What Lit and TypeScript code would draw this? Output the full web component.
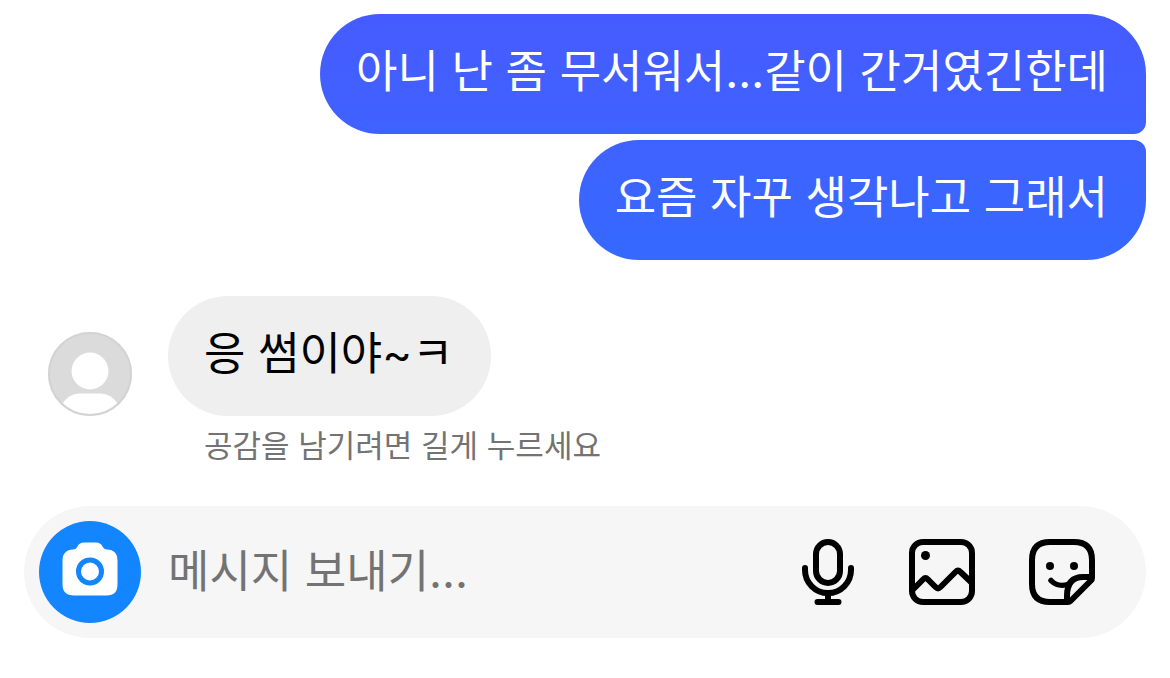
import { LitElement, html, css } from "lit";
import { customElement } from "lit/decorators.js";

@customElement("app-root")
export class AppRoot extends LitElement {
  static styles = css`
    :host {
      display: block;
      min-height: 100vh;
      box-sizing: border-box;
      padding: 14px 24px 40px;
      background: #fff;
      font-family: "Inter", "Noto Sans CJK KR", sans-serif;
      color: #000;
    }
    .sent {
      display: flex;
      flex-direction: column;
      align-items: flex-end;
      gap: 6px;
      margin-bottom: 36px;
    }
    .bubble {
      padding: 34px 38px 38px 36px;
      border-radius: 60px;
      font-size: 45px;
      line-height: 48px;
    }
    .first {
      color: #fff;
      border-bottom-right-radius: 12px;
      background: linear-gradient(#465bff, #3f62ff);
    }
    .last {
      color: #fff;
      border-top-right-radius: 12px;
      background: linear-gradient(#3f62ff, #3569ff);
    }
    .received {
      display: flex;
      align-items: flex-end;
      gap: 36px;
      padding-left: 24px;
    }
    .avatar {
      display: block;
      width: 84px;
      height: 84px;
    }
    .grey {
      background: #efefef;
    }
    .hint {
      margin: 12px 0 42px;
      padding-left: 180px;
      font-size: 31px;
      line-height: 36px;
      color: #737373;
    }
    .composer {
      display: flex;
      align-items: center;
      padding: 15px 48px 15px 15px;
      border-radius: 66px;
      background: #f6f6f6;
    }
    button {
      display: block;
      flex: none;
      margin: 0;
      padding: 0;
      border: 0;
      background: none;
      color: inherit;
    }
    button svg {
      display: block;
    }
    .camera {
      width: 102px;
      height: 102px;
      border-radius: 50%;
      background: #1285ff;
    }
    .field {
      flex: 1;
      min-width: 0;
      height: 72px;
      margin: 0 24px;
      padding: 0 3px 2px;
      box-sizing: border-box;
      border: 0;
      outline: none;
      background: none;
      font: inherit;
      font-size: 45px;
      color: #000;
    }
    .field::placeholder {
      color: #737373;
      opacity: 1;
    }
    .tools {
      display: flex;
      gap: 48px;
    }
  `;

  render() {
    return html`
      <div class="sent">
        <div class="bubble first">아니 난 좀 무서워서...같이 간거였긴한데</div>
        <div class="bubble last">요즘 자꾸 생각나고 그래서</div>
      </div>
      <div class="received">
        <svg class="avatar" viewBox="0 0 84 84" aria-hidden="true">
          <circle cx="42" cy="42" r="42" fill="#dbdbdb" />
          <circle cx="42" cy="39" r="18.500" fill="#fff" />
          <path d="M14 72 Q21 61.500 31 61.500 H53 Q63 61.500 70 72 A41 41 0 0 1 14 72Z" fill="#fff" />
          <circle cx="42" cy="42" r="41" fill="none" stroke="#d3d3d3" stroke-width="2" />
        </svg>
        <div class="bubble grey">응 썸이야~ㅋ</div>
      </div>
      <div class="hint">공감을 남기려면 길게 누르세요</div>
      <form class="composer" @submit=${(e: Event) => e.preventDefault()}>
        <button class="camera" type="button" aria-label="카메라">
          <svg width="102" height="102" viewBox="0 0 102 102">
            <path
              fill="#fff"
              d="M34 28.500C36 28.500 37.500 27.500 38.500 25.500C40 22.500 42 21.500 45 21.500H57C60 21.500 62 22.500 63.500 25.500C64.500 27.500 66 28.500 68 28.500C75 28.500 78.500 32.500 78.500 39.500V63C78.500 71 75 74.500 67.500 74.500H35C27.500 74.500 23.500 71 23.500 63V39.500C23.500 32.500 27.500 28.500 34 28.500Z"
            />
            <circle cx="51" cy="50.500" r="11.500" fill="none" stroke="#1285ff" stroke-width="5" />
          </svg>
        </button>
        <input class="field" type="text" aria-label="메시지" placeholder="메시지 보내기..." />
        <div class="tools">
          <button type="button" aria-label="음성 메시지">
            <svg width="60" height="72" viewBox="6 0 60 72" fill="none" stroke="#000" stroke-width="6" stroke-linecap="round">
              <rect x="24" y="6" width="24" height="41" rx="12" />
              <path d="M13 32V34A23 23 0 0 0 59 34V32" />
              <path d="M36 57V65M25.500 66H46.500" />
            </svg>
          </button>
          <button type="button" aria-label="사진">
            <svg width="72" height="72" viewBox="0 0 72 72" fill="none" stroke="#000" stroke-width="6">
              <rect x="6" y="6" width="60" height="60" rx="11" />
              <circle cx="19.500" cy="19.500" r="4.500" fill="#000" stroke="none" />
              <path d="M7 53.500L17 43.500Q19.500 41 22 43.500L29.500 51Q32 53.500 34.500 51L49.500 36Q52 33.500 54.500 36L65 46" />
            </svg>
          </button>
          <button type="button" aria-label="스티커">
            <svg width="72" height="72" viewBox="0 0 72 72" fill="none" stroke="#000" stroke-width="6" stroke-linecap="round" stroke-linejoin="round">
              <path d="M42 66H24Q6 66 6 48V24Q6 6 24 6H48Q66 6 66 24V42Q66 43.500 65 44.500L44.500 65Q43.500 66 42 66Z" />
              <path d="M41 65V60C41 48 46 41 57 41H65" />
              <path d="M25 44.500C29 49 36 50.500 43 48" stroke-width="5.500" />
              <circle cx="24" cy="30" r="4" fill="#000" stroke="none" />
              <circle cx="48" cy="30" r="4" fill="#000" stroke="none" />
            </svg>
          </button>
        </div>
      </form>
    `;
  }
}
